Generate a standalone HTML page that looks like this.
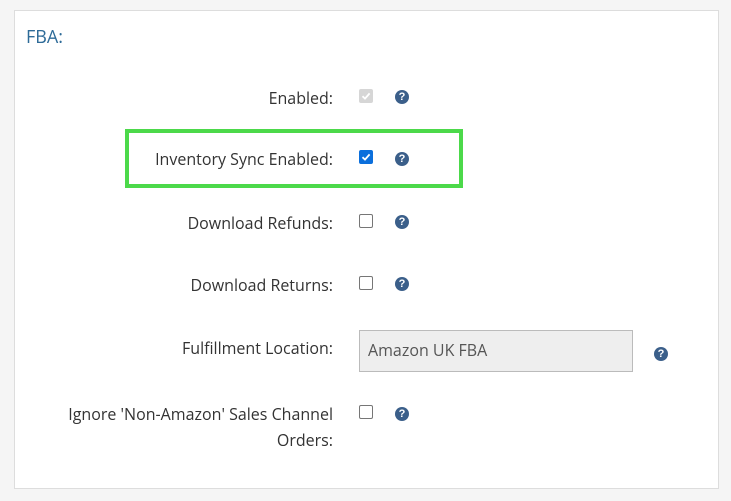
<!DOCTYPE html>
<html><head><style>
body{margin:0;width:731px;height:501px;background:#f5f5f5;font-family:"Open Sans","Liberation Sans",sans-serif;position:relative;overflow:hidden}
.panel{position:absolute;left:14px;top:10px;width:703px;height:477px;background:#fff;border:1px solid #ddd}
.t{position:absolute;font-size:16px;color:#333;white-space:nowrap}
.lab{right:398px;text-align:right}
.cb{position:absolute;left:359px;width:12px;height:12px;border:1px solid #767676;border-radius:2px;background:#fff}
.cb.on{background:#0b6fdc;border-color:#0b6fdc}
.cb.dis{background:#d6d6d6;border-color:#d6d6d6}
.q{position:absolute;width:14px;height:14px;border-radius:50%;background:#3b5f8a;color:#fff;font:bold 11px/14px "Liberation Sans",sans-serif;text-align:center}
svg.ck{position:absolute;left:1px;top:1px}
</style></head><body>
<div class="panel"></div>
<div class="t" style="left:26px;top:25px;font-size:18px;color:#2e6b98">FBA:</div>

<div class="t lab" style="top:87px">Enabled:</div>
<div class="cb dis" style="top:89px"><svg class="ck" width="10" height="10" viewBox="0 0 10 10"><path d="M1.5 5.2L4 7.6 8.6 2.4" stroke="#fff" stroke-width="1.8" fill="none"/></svg></div>
<div class="q" style="left:395px;top:90px">?</div>

<div style="position:absolute;left:125px;top:129px;width:330px;height:51px;border:4px solid #4cd94a"></div>
<div class="t lab" style="top:148px">Inventory Sync Enabled:</div>
<div class="cb on" style="top:150px"><svg class="ck" width="10" height="10" viewBox="0 0 10 10"><path d="M1.5 5.2L4 7.6 8.6 2.4" stroke="#fff" stroke-width="1.8" fill="none"/></svg></div>
<div class="q" style="left:395px;top:152px">?</div>

<div class="t lab" style="top:212px">Download Refunds:</div>
<div class="cb" style="top:214px"></div>
<div class="q" style="left:395px;top:215px">?</div>

<div class="t lab" style="top:274px">Download Returns:</div>
<div class="cb" style="top:276px"></div>
<div class="q" style="left:395px;top:277px">?</div>

<div class="t lab" style="top:337px">Fulfillment Location:</div>
<div style="position:absolute;left:359px;top:330px;width:272px;height:40px;background:#eee;border:1px solid #bbb"></div>
<div class="t" style="left:368px;top:339px;color:#555">Amazon UK FBA</div>
<div class="q" style="left:654px;top:347px">?</div>

<div class="t lab" style="top:403px">Ignore 'Non-Amazon' Sales Channel</div>
<div class="t lab" style="top:429px">Orders:</div>
<div class="cb" style="top:405px"></div>
<div class="q" style="left:395px;top:407px">?</div>
</body></html>
